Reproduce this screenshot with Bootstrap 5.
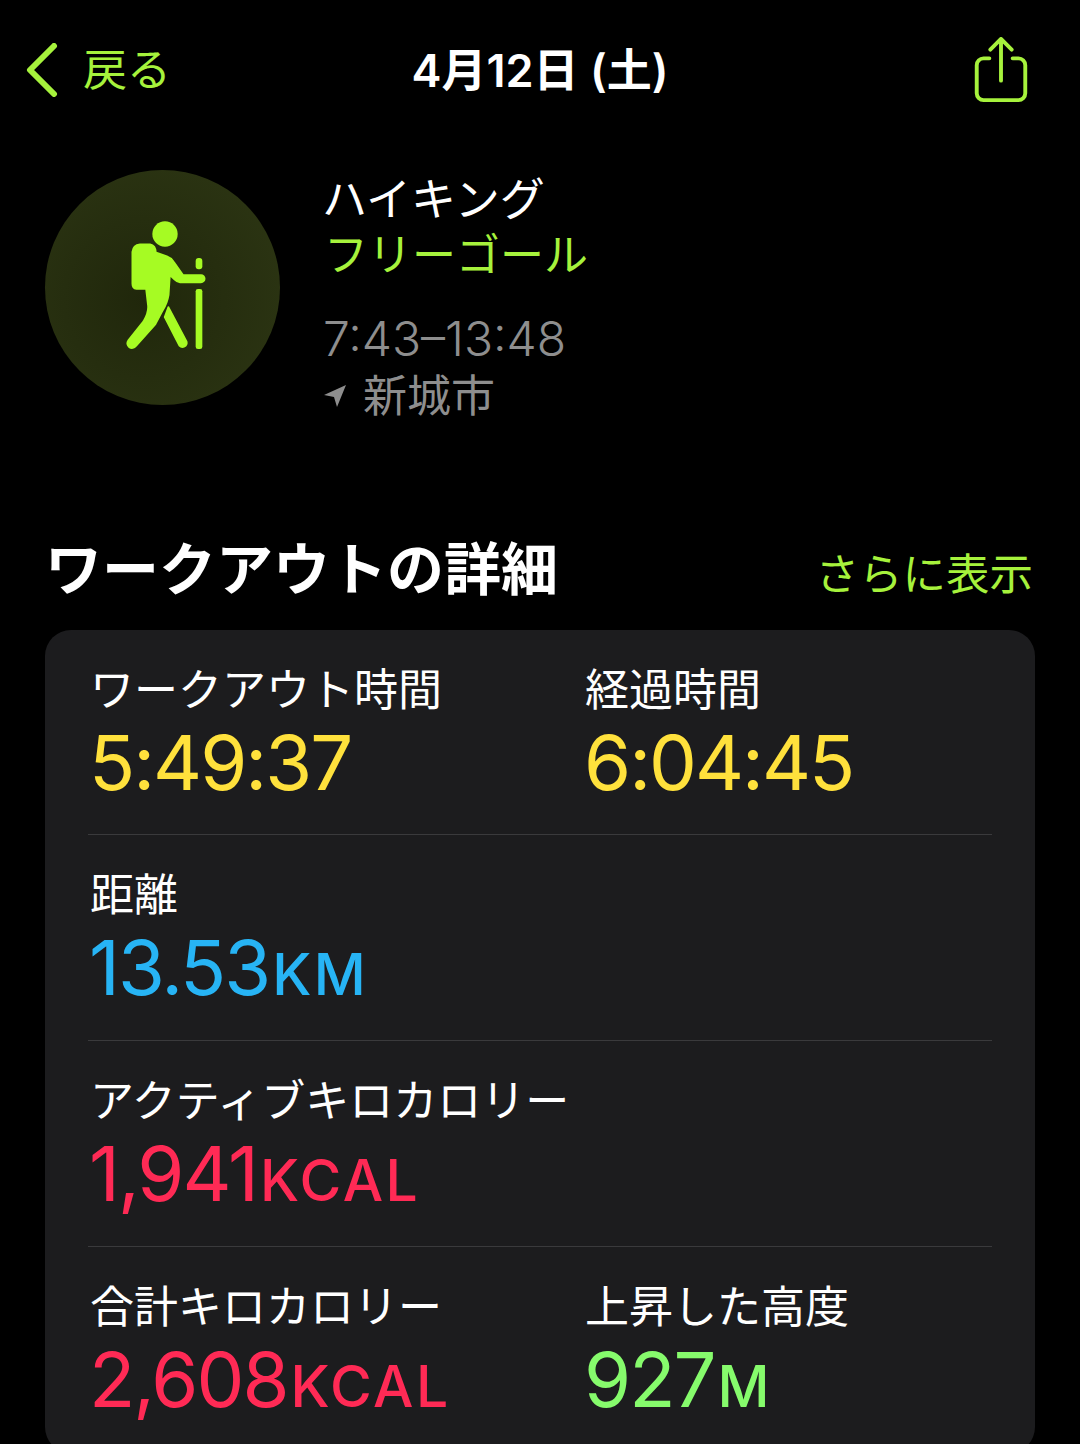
<!DOCTYPE html>
<html lang="ja">
<head>
    <meta charset="UTF-8">
    <title>ワークアウトの詳細</title>
    <meta name="viewport" content="width=device-width, initial-scale=1">
    <link href="https://cdn.jsdelivr.net/npm/bootstrap@5.3.3/dist/css/bootstrap.min.css" rel="stylesheet">
    <style>
        html, body { height: 1444px; overflow: hidden; }
        body { background: #000; color: #fff; font-family: Inter, "Noto Sans CJK JP", sans-serif; }
        .accent { color: #a6f23c; }
        .top-bar { height: 140px; padding: 0 52px 0 25px; }
        .top-left { width: 247px; }
        .top-right { width: 220px; }
        .back-label { font-size: 44px; font-weight: 400; line-height: 1; }
        .top-title { font-size: 45px; font-weight: 600; line-height: 1; }
        .summary { padding: 30px 0 0 45px; height: 340px; gap: 42px; }
        .avatar { width: 235px; height: 235px; border-radius: 50%; background: radial-gradient(circle at 42% 55%, #20270b, #2c3513 85%); flex-shrink: 0; }
        .summary-lines { font-size: 44px; line-height: 58px; margin-top: -2px; font-weight: 400; }
        .activity-name { font-size: 45px; margin-top: 3px; margin-bottom: -3px; }
        .goal-line { padding-left: 2px; }
        .muted { color: #8e8e8e; }
        .time-line { margin-top: 26px; padding-left: 1px; font-size: 48px; font-weight: 300; }
        .place-line { margin-top: -1px; padding-left: 1px; }
        .heading-row { padding: 0 47px 0 45px; height: 150px; padding-bottom: 32px; }
        .heading { font-size: 57px; font-weight: 700; line-height: 1; margin: 0; }
        .more-link { font-size: 43.5px; font-weight: 400; line-height: 1; margin-bottom: 2px; }
        .stats { margin: 0 45px; background: #1c1c1e; border-radius: 26px; padding: 0 43px; }
        .stat-row { height: 206px; border-bottom: 1px solid #3a3a3c; padding: 31px 0 0 2px; }
        .stat-row:first-child { height: 205px; }
        .stat-cell { flex: 0 0 495px; }
        .stat-label { font-size: 44px; font-weight: 400; line-height: 58px; }
        .stat-value { font-size: 76px; font-weight: 400; line-height: 86px; letter-spacing: -2px; margin-left: -1px; }
        .unit { font-size: 57px; font-weight: 500; letter-spacing: 2.5px; margin-left: 3px; }
        .c-yellow { color: #ffe13c; }
        .c-blue { color: #27b4f5; }
        .c-red { color: #ff2a55; }
        .c-green { color: #86fb6c; }
    </style>
</head>
<body>

    <div class="top-bar d-flex align-items-center justify-content-between">
        <div class="top-left d-flex align-items-center accent">
            <svg width="34" height="54" viewBox="0 0 34 54" fill="none" stroke="#a6f23c" stroke-width="6" stroke-linecap="round" stroke-linejoin="round">
                <path d="M29 3 L5 27 L29 51"/>
            </svg>
            <span class="back-label ms-4">戻る</span>
        </div>
        <div class="top-title">4月12日 (土)</div>
        <div class="top-right d-flex justify-content-end">
            <svg width="54" height="66" viewBox="0 0 54 68" fill="none" stroke="#a6f23c" stroke-width="4" stroke-linecap="round" stroke-linejoin="round">
                <path d="M15 22 H9 a7 7 0 0 0 -7 7 V58 a7 7 0 0 0 7 7 H45 a7 7 0 0 0 7 -7 V29 a7 7 0 0 0 -7 -7 H39"/>
                <path d="M27 45 V3 M16 13 L27 2 L38 13"/>
            </svg>
        </div>
    </div>

    <div class="summary d-flex">
        <div class="avatar d-flex align-items-center justify-content-center">
            <svg width="130" height="170" viewBox="-6 10 390 510" fill="#a6fb23">
                <circle cx="195" cy="103" r="38"/>
                <path stroke="#a6fb23" stroke-width="9" stroke-linejoin="round" d="M120 136 H150 Q165 138 166 160 L200 172 Q212 176 220 188 L248 228 H303 a9 9 0 0 1 0 18 H240 Q232 246 226 239 L208 222 L204 285 Q200 310 186 332 L165 372 L106 438 a11 11 0 0 1 -20 -14 L132 366 Q148 340 146 318 L140 266 H110 Q99 264 99 252 V157 Q101 138 120 136 Z"/>
                <path stroke="#a6fb23" stroke-width="5" stroke-linejoin="round" d="M205 322 L260 426 a13 13 0 0 1 -22 12 L194 352 Z"/>
                <rect x="287" y="175" width="20" height="34" rx="9"/>
                <rect x="287" y="268" width="20" height="180" rx="7"/>
            </svg>
        </div>
        <div class="summary-lines">
            <div class="activity-name">ハイキング</div>
            <div class="accent goal-line">フリーゴール</div>
            <div class="muted time-line">7:43–13:48</div>
            <div class="muted place-line d-flex align-items-center">
                <svg class="me-3" width="24" height="24" viewBox="0 0 24 24" fill="#8e8e8e"><path d="M23 1 L14 23 L11 13 L1 11 Z"/></svg>
                <span>新城市</span>
            </div>
        </div>
    </div>

    <div class="heading-row d-flex align-items-end justify-content-between">
        <h1 class="heading">ワークアウトの詳細</h1>
        <a class="more-link accent text-decoration-none" href="#">さらに表示</a>
    </div>

    <div class="stats">
        <div class="stat-row d-flex">
            <div class="stat-cell">
                <div class="stat-label">ワークアウト時間</div>
                <div class="stat-value c-yellow">5:49:37</div>
            </div>
            <div class="stat-cell">
                <div class="stat-label">経過時間</div>
                <div class="stat-value c-yellow">6:04:45</div>
            </div>
        </div>
        <div class="stat-row d-flex">
            <div class="stat-cell">
                <div class="stat-label">距離</div>
                <div class="stat-value c-blue">13.53<span class="unit">KM</span></div>
            </div>
        </div>
        <div class="stat-row d-flex">
            <div class="stat-cell">
                <div class="stat-label text-nowrap">アクティブキロカロリー</div>
                <div class="stat-value c-red">1,941<span class="unit">KCAL</span></div>
            </div>
        </div>
        <div class="stat-row d-flex">
            <div class="stat-cell">
                <div class="stat-label">合計キロカロリー</div>
                <div class="stat-value c-red">2,608<span class="unit">KCAL</span></div>
            </div>
            <div class="stat-cell">
                <div class="stat-label">上昇した高度</div>
                <div class="stat-value c-green">927<span class="unit">M</span></div>
            </div>
        </div>
    </div>

    <script src="https://cdn.jsdelivr.net/npm/bootstrap@5.3.3/dist/js/bootstrap.bundle.min.js"></script>
</body>
</html>
